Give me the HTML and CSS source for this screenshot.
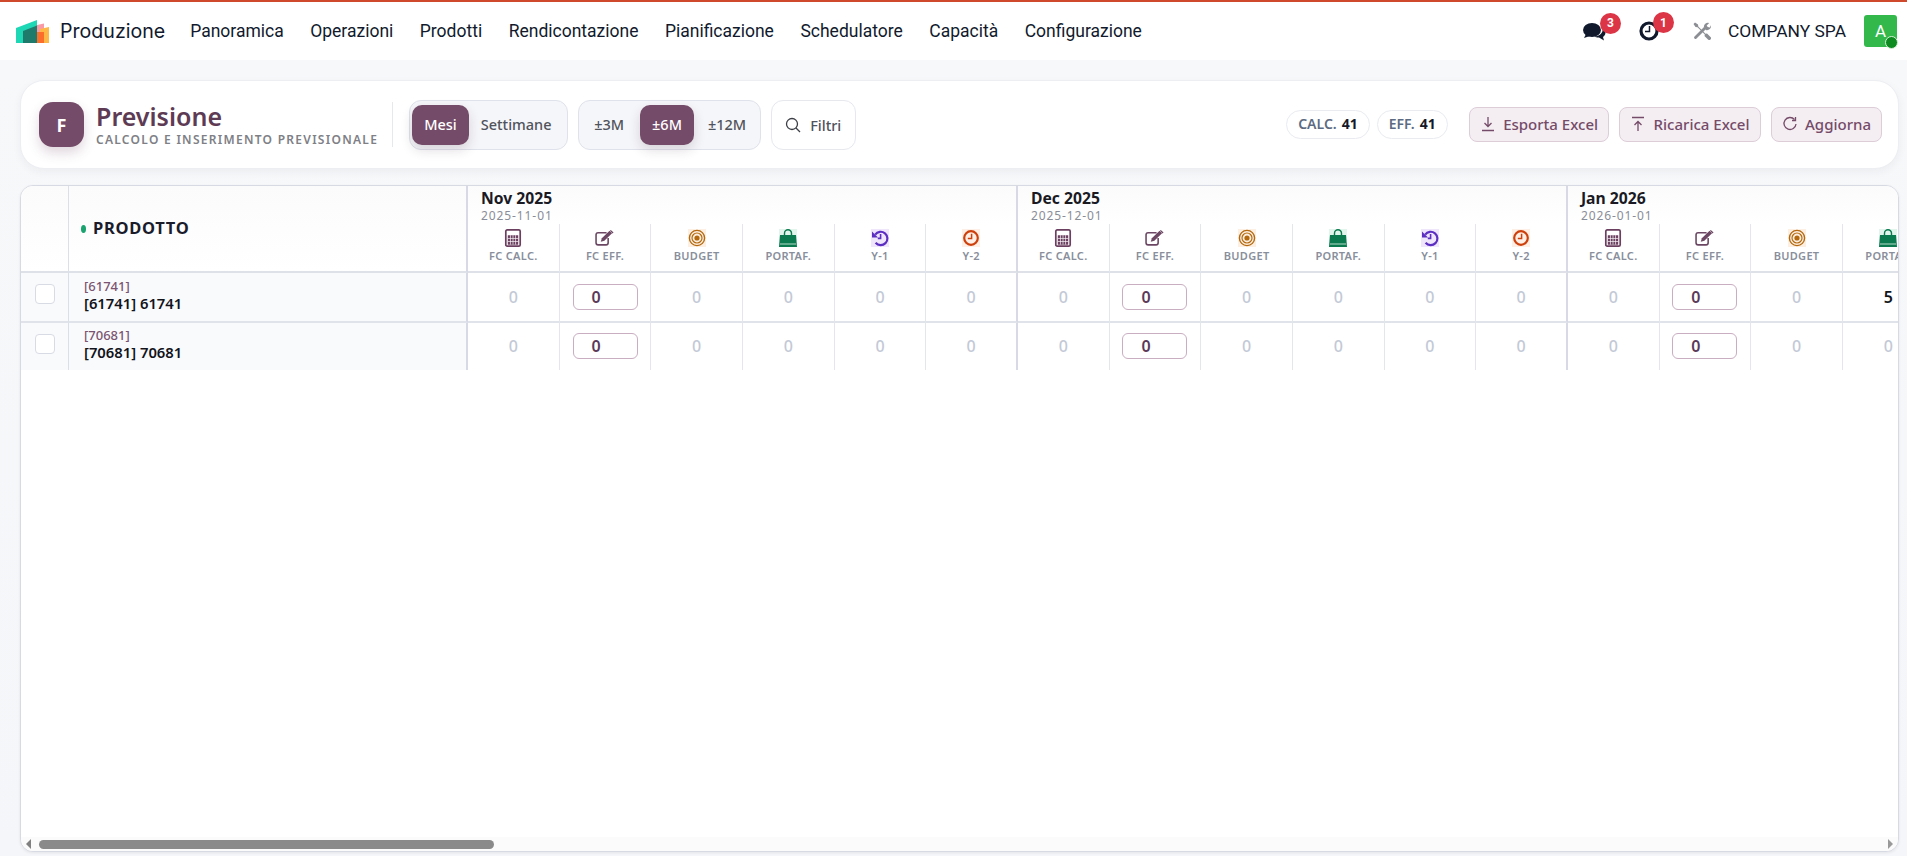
FILE: index.html
```html
<!DOCTYPE html>
<html lang="it">
<head>
<meta charset="utf-8">
<title>Previsione</title>
<link rel="stylesheet" href="styles.css">
</head>
<body>
<svg class="defs" width="0" height="0" aria-hidden="true">
  <symbol id="i-calc" viewBox="0 0 17 19"><rect x=".9" y=".9" width="15.200" height="17.200" rx="1.500" fill="none" stroke="currentColor" stroke-width="1.800"/><path d="M3 6.500h11V16.500H3z" fill="currentColor"/><path d="M5.800 6.500V16.500M8.500 6.500V16.500M11.200 6.500V16.500M3 10h11M3 13.200h11" stroke="#fff" stroke-width=".7"/></symbol>
  <symbol id="i-edit" viewBox="0 0 19 16"><path d="M12.500 8v4.500a2 2 0 0 1-2 2H3a2 2 0 0 1-2-2V5a2 2 0 0 1 2-2h8" fill="none" stroke="currentColor" stroke-width="1.500"/><path d="M5.500 11.500l1-3.200L13.800 1l2.400 2.400-7.300 7.200z" fill="currentColor"/><path d="M15 .3l2.600 2.500-.9.9-2.500-2.500z" fill="currentColor"/></symbol>
  <symbol id="i-target" viewBox="0 0 18 18"><rect width="18" height="18" fill="#fdf0e2"/><circle cx="9" cy="9" r="7.600" fill="none" stroke="currentColor" stroke-width="1.400"/><circle cx="9" cy="9" r="5" fill="none" stroke="currentColor" stroke-width="1.200"/><circle cx="9" cy="9" r="2.600" fill="currentColor"/></symbol>
  <symbol id="i-bag" viewBox="0 0 18 18"><rect width="18" height="18" fill="#e1f5ec"/><path d="M1 6h16l1 12H0z" fill="currentColor"/><path d="M5.500 8V4.200a3.500 3.500 0 0 1 7 0V8" fill="none" stroke="currentColor" stroke-width="1.400"/><path d="M1 15h16" stroke="#e1f5ec" stroke-width=".8"/></symbol>
  <symbol id="i-hist" viewBox="0 0 18 18"><rect width="18" height="18" fill="#efe6fb"/><path d="M4.200 5.600A6.700 6.700 0 1 1 4.600 13.800" fill="none" stroke="currentColor" stroke-width="2.200"/><path d="M1 2.500v6h6z" fill="currentColor"/><path d="M9.600 5v4.400H6.800" fill="none" stroke="currentColor" stroke-width="1.600"/></symbol>
  <symbol id="i-clock" viewBox="0 0 18 18"><rect width="18" height="18" fill="#fdeee6"/><circle cx="9" cy="9" r="6.800" fill="none" stroke="currentColor" stroke-width="2.200"/><path d="M9.600 4.800v4.800H5.800" fill="none" stroke="currentColor" stroke-width="1.500"/></symbol>
</svg>

<header class="topbar">
  <div class="brand">
    <svg class="logo" viewBox="0 0 33 23"><polygon points="21,5 28,3.500 28,23 21,23" fill="#fa9aa6"/><polygon points="24,9 33,7 33,23 24,23" fill="#fdb845"/><rect x="21" y="12" width="7" height="11" fill="#fb6e2b"/><polygon points="0,8 21,0 21,23 0,23" fill="#1ed7b5"/><polygon points="7,11 21,5.500 21,23 7,23" fill="#1f7a6c"/></svg>
    <span class="brand-name">Produzione</span>
  </div>
  <nav class="menu">
    <a>Panoramica</a><a>Operazioni</a><a>Prodotti</a><a>Rendicontazione</a><a>Pianificazione</a><a>Schedulatore</a><a>Capacità</a><a>Configurazione</a>
  </nav>
  <div class="systray">
    <span class="tray-item tray-chat">
      <svg class="tray-icon" viewBox="0 0 23 19"><ellipse cx="9" cy="8" rx="9" ry="7" fill="#111a2d"/><path d="M3 12l-2 4 6-2z" fill="#111a2d"/><path d="M19.500 6.500c2.500 1.300 3.500 3.500 2.800 5.500-.5 1.400-1.500 2.300-2.300 2.900l1 3.600-5-3c-1.800.1-3.400-.4-4.500-1.100 5-.2 9-3.600 8-7.900z" fill="#111a2d"/></svg>
      <span class="badge">3</span>
    </span>
    <span class="tray-item tray-clock">
      <svg class="tray-icon" viewBox="0 0 20 20"><circle cx="10" cy="10" r="8" fill="none" stroke="#111a2d" stroke-width="3.200"/><path d="M10.500 5v5.500H6" fill="none" stroke="#111a2d" stroke-width="1.500"/></svg>
      <span class="badge">1</span>
    </span>
    <span class="tray-item tray-tools">
      <svg class="tray-icon" viewBox="0 0 18 18"><path d="M1.500 14.500L11 5l2 2-9.500 9.500a1.400 1.400 0 0 1-2-2z" fill="#8b8e93"/><path d="M11 5.500a4 4 0 0 1 5.200-4.600L13.700 3.400l1 1.700 2.200.3 1-2.200a4 4 0 0 1-5 4.800z" fill="#8b8e93"/><path d="M2 .5l3 2 .3 2 7.200 7.300 1.500-.3 3.500 3.500a1.600 1.600 0 0 1-2.500 2.500l-3.500-3.500.3-1.500L4.500 5.300l-2-.3-2-3z" fill="#8b8e93"/></svg>
    </span>
    <span class="company">COMPANY SPA</span>
    <span class="avatar">A<span class="presence"></span></span>
  </div>
</header>

<main class="content">
  <section class="toolbar">
    <div class="title-block">
      <span class="title-icon">F</span>
      <div class="title-text">
        <h1>Previsione</h1>
        <p>CALCOLO E INSERIMENTO PREVISIONALE</p>
      </div>
    </div>
    <div class="seg seg-unit">
      <button class="seg-btn active">Mesi</button>
      <button class="seg-btn">Settimane</button>
    </div>
    <div class="seg seg-range">
      <button class="seg-btn">±3M</button>
      <button class="seg-btn active">±6M</button>
      <button class="seg-btn">±12M</button>
    </div>
    <button class="filter-btn">
      <svg class="btn-icon" viewBox="0 0 16 16"><circle cx="7" cy="7" r="5.500" fill="none" stroke="#3c3f46" stroke-width="1.300"/><path d="M11 11l4 4" stroke="#3c3f46" stroke-width="1.300"/></svg>
      Filtri
    </button>
    <div class="toolbar-right">
      <span class="pill pill-calc">CALC. <b>41</b></span>
      <span class="pill pill-eff">EFF. <b>41</b></span>
      <button class="act-btn btn-export">
        <svg class="btn-icon" viewBox="0 0 16 16"><path d="M8 1v9M4.500 7L8 10.500 11.500 7M2 14.500h12" fill="none" stroke="#744b68" stroke-width="1.300"/></svg>
        Esporta Excel
      </button>
      <button class="act-btn btn-reload">
        <svg class="btn-icon" viewBox="0 0 16 16"><path d="M8 15V5.500M4.500 9L8 5.500 11.500 9M2 1.500h12" fill="none" stroke="#744b68" stroke-width="1.300"/></svg>
        Ricarica Excel
      </button>
      <button class="act-btn btn-refresh">
        <svg class="btn-icon" viewBox="0 0 16 16"><path d="M12.500 3.500A6 6 0 1 0 14 8" fill="none" stroke="#744b68" stroke-width="1.300"/><path d="M10 4.500h3.500V1" fill="none" stroke="#744b68" stroke-width="1.300"/></svg>
        Aggiorna
      </button>
    </div>
  </section>

  <section class="grid-card">
    <div class="grid-scroll">
      <table class="grid">
        <colgroup>
          <col class="c-check"><col class="c-prod">
          <col class="c-val"><col class="c-val"><col class="c-val"><col class="c-val"><col class="c-val"><col class="c-val">
          <col class="c-val"><col class="c-val"><col class="c-val"><col class="c-val"><col class="c-val"><col class="c-val">
          <col class="c-val"><col class="c-val"><col class="c-val"><col class="c-val"><col class="c-val"><col class="c-val">
        </colgroup>
        <thead>
          <tr class="month-row">
            <th class="th-check" rowspan="2"></th>
            <th class="th-prod" rowspan="2"><span class="dot"></span>PRODOTTO</th>
            <th class="th-month" colspan="6"><strong>Nov 2025</strong><small>2025-11-01</small></th>
            <th class="th-month" colspan="6"><strong>Dec 2025</strong><small>2025-12-01</small></th>
            <th class="th-month" colspan="6"><strong>Jan 2026</strong><small>2026-01-01</small></th>
          </tr>
          <tr class="sub-row">
            <th><svg class="ci ci-calc"><use href="#i-calc"/></svg><span>FC CALC.</span></th>
            <th><svg class="ci ci-edit"><use href="#i-edit"/></svg><span>FC EFF.</span></th>
            <th><svg class="ci ci-target"><use href="#i-target"/></svg><span>BUDGET</span></th>
            <th><svg class="ci ci-bag"><use href="#i-bag"/></svg><span>PORTAF.</span></th>
            <th><svg class="ci ci-hist"><use href="#i-hist"/></svg><span>Y-1</span></th>
            <th class="m-last"><svg class="ci ci-clock"><use href="#i-clock"/></svg><span>Y-2</span></th>
            <th><svg class="ci ci-calc"><use href="#i-calc"/></svg><span>FC CALC.</span></th>
            <th><svg class="ci ci-edit"><use href="#i-edit"/></svg><span>FC EFF.</span></th>
            <th><svg class="ci ci-target"><use href="#i-target"/></svg><span>BUDGET</span></th>
            <th><svg class="ci ci-bag"><use href="#i-bag"/></svg><span>PORTAF.</span></th>
            <th><svg class="ci ci-hist"><use href="#i-hist"/></svg><span>Y-1</span></th>
            <th class="m-last"><svg class="ci ci-clock"><use href="#i-clock"/></svg><span>Y-2</span></th>
            <th><svg class="ci ci-calc"><use href="#i-calc"/></svg><span>FC CALC.</span></th>
            <th><svg class="ci ci-edit"><use href="#i-edit"/></svg><span>FC EFF.</span></th>
            <th><svg class="ci ci-target"><use href="#i-target"/></svg><span>BUDGET</span></th>
            <th><svg class="ci ci-bag"><use href="#i-bag"/></svg><span>PORTAF.</span></th>
            <th><svg class="ci ci-hist"><use href="#i-hist"/></svg><span>Y-1</span></th>
            <th class="m-last"><svg class="ci ci-clock"><use href="#i-clock"/></svg><span>Y-2</span></th>
          </tr>
        </thead>
        <tbody>
          <tr class="row-first">
            <td class="td-check"><span class="check"></span></td>
            <td class="td-prod"><span class="code">[61741]</span><span class="name">[61741] 61741</span></td>
            <td>0</td><td><span class="num-input">0</span></td><td>0</td><td>0</td><td>0</td><td class="m-last">0</td>
            <td>0</td><td><span class="num-input">0</span></td><td>0</td><td>0</td><td>0</td><td class="m-last">0</td>
            <td>0</td><td><span class="num-input">0</span></td><td>0</td><td class="nonzero">5</td><td>0</td><td class="m-last">0</td>
          </tr>
          <tr class="row-last">
            <td class="td-check"><span class="check"></span></td>
            <td class="td-prod"><span class="code">[70681]</span><span class="name">[70681] 70681</span></td>
            <td>0</td><td><span class="num-input">0</span></td><td>0</td><td>0</td><td>0</td><td class="m-last">0</td>
            <td>0</td><td><span class="num-input">0</span></td><td>0</td><td>0</td><td>0</td><td class="m-last">0</td>
            <td>0</td><td><span class="num-input">0</span></td><td>0</td><td>0</td><td>0</td><td class="m-last">0</td>
          </tr>
        </tbody>
      </table>
    </div>
    <div class="hbar">
      <span class="arrow arrow-left"></span>
      <span class="thumb"></span>
      <span class="arrow arrow-right"></span>
    </div>
  </section>
</main>
</body>
</html>
```
FILE: styles.css
```css
* { box-sizing: border-box; }
html, body { margin: 0; height: 856px; overflow: hidden; }
body {
  background: #f5f6f9;
  font-family: "Noto Sans", sans-serif;
  color: #1a1c28;
  display: flex;
  flex-direction: column;
}
.defs { position: absolute; }

/* top bar */
.topbar {
  height: 60px;
  flex: none;
  border-top: 2px solid #cf4a2d;
  background: #fff;
  display: flex;
  align-items: center;
  padding: 0 10px 0 16px;
  font-family: Roboto, sans-serif;
  color: #111a2d;
}
.brand { display: flex; align-items: center; gap: 11px; }
.logo { width: 33px; height: 23px; }
.brand-name { font-family: Inter, sans-serif; font-size: 19.600px; }
.menu { display: flex; gap: 26.500px; margin-left: 25px; font-size: 17.500px; }
.systray { margin-left: auto; display: flex; align-items: center; }
.tray-item { position: relative; display: flex; }
.tray-chat .tray-icon { width: 23px; height: 19px; }
.tray-clock { margin-left: 33px; }
.tray-clock .tray-icon { width: 20px; height: 20px; }
.tray-tools { margin-left: 34px; }
.tray-tools .tray-icon { width: 18px; height: 18px; }
.badge {
  position: absolute;
  top: -9px;
  left: 17px;
  width: 21px;
  height: 21px;
  border-radius: 50%;
  background: #dc3545;
  color: #fff;
  font-size: 12px;
  font-weight: 700;
  display: flex;
  align-items: center;
  justify-content: center;
}
.tray-clock .badge { left: 14px; }
.company { margin-left: 17px; font-size: 17.400px; }
.avatar {
  position: relative;
  margin-left: 18px;
  width: 33px;
  height: 32px;
  border-radius: 3px;
  background: #33b84b;
  color: #fff;
  font-size: 17px;
  display: flex;
  align-items: center;
  justify-content: center;
}
.presence {
  position: absolute;
  right: -1px;
  bottom: -2px;
  width: 13px;
  height: 13px;
  border-radius: 50%;
  background: #0d8a20;
  border: 1px solid #d8efd8;
}

/* content */
.content {
  flex: 1;
  min-height: 0;
  padding: 20px 8px 4px 20px;
  display: flex;
  flex-direction: column;
  gap: 16px;
  background: linear-gradient(#f7f8fa, #f5f6f9);
}
.toolbar {
  flex: none;
  height: 89px;
  background: #fff;
  border: 1px solid #eceef2;
  border-radius: 24px;
  box-shadow: 0 3px 8px rgba(30, 30, 50, .05);
  display: flex;
  align-items: center;
  padding: 0 16px 0 18px;
}
.title-block {
  display: flex;
  align-items: center;
  gap: 12px;
  height: 45px;
  padding-right: 14px;
  border-right: 1px solid #e6e8ee;
}
.title-icon {
  width: 45px;
  height: 45px;
  border-radius: 14px;
  background: #744b68;
  color: #fff;
  font-weight: 700;
  font-size: 18px;
  display: flex;
  align-items: center;
  justify-content: center;
  box-shadow: 0 6px 12px rgba(116, 75, 104, .22);
}
.title-text h1 {
  margin: 0 0 4px;
  font-size: 25px;
  line-height: 26px;
  font-weight: 600;
  color: #5e3b54;
}
.title-text p {
  margin: 0;
  font-size: 12px;
  line-height: 14px;
  font-weight: 600;
  letter-spacing: 1.280px;
  color: #7e8086;
}
.seg {
  height: 50px;
  margin-left: 10px;
  padding: 4px 2px;
  background: #f5f6f9;
  border: 1px solid #dfe2ea;
  border-radius: 12px;
  display: flex;
}
.seg-unit { margin-left: 16px; width: 159px; }
.seg-range { width: 183px; padding-left: 3px; }
.seg-btn {
  border: 0;
  background: none;
  padding: 0 12px 2px;
  border-radius: 10px;
  font: 500 14.500px "Noto Sans", sans-serif;
  color: #50535c;
}
.seg-btn.active {
  background: #744b68;
  color: #fff;
  box-shadow: 0 5px 12px rgba(60, 40, 60, .16);
}
.seg-range .seg-btn.active { margin: 0 2px 0 4px; }
.filter-btn {
  height: 50px;
  width: 85px;
  margin-left: 10px;
  padding: 0 0 0 13px;
  border: 1px solid #e6e8ee;
  border-radius: 12px;
  background: #fff;
  font: 500 14.500px "Noto Sans", sans-serif;
  color: #50535c;
  display: flex;
  align-items: center;
  gap: 9px;
}
.btn-icon { width: 16px; height: 16px; flex: none; }
.toolbar-right { margin-left: auto; display: flex; align-items: center; }
.pill {
  height: 29px;
  padding: 0 11px 2px;
  border: 1px solid #e9ebf0;
  border-radius: 15px;
  background: #fff;
  font-size: 14px;
  font-weight: 600;
  color: #5d6b82;
  display: flex;
  align-items: center;
  gap: 5px;
}
.pill b { color: #151925; font-weight: 700; }
.pill-eff { margin-left: 7px; margin-right: 21px; }
.act-btn {
  height: 35px;
  margin-left: 10px;
  padding: 0 10px 2px;
  border: 1px solid #dccdd7;
  border-radius: 8px;
  background: #f4eef3;
  color: #744b68;
  font: 500 15px "Noto Sans", sans-serif;
  display: flex;
  align-items: center;
  gap: 7.500px;
}
.btn-export { margin-left: 0; }

/* grid */
.grid-card {
  position: relative;
  flex: 1;
  min-height: 0;
  background: #fff;
  border: 1px solid #d8dae3;
  border-radius: 13px;
  overflow: hidden;
  box-shadow: 0 1px 3px rgba(30, 30, 50, .08);
}
.grid-scroll { height: 100%; overflow: hidden; }
.grid { border-collapse: separate; border-spacing: 0; table-layout: fixed; width: 2097px; }
.c-check { width: 48px; }
.c-prod { width: 399px; }
.c-val { width: 91.670px; }
th { padding: 0; font-weight: 600; background: #fff; }
.month-row th { height: 38px; background: linear-gradient(#fbfbfc, #fff); }
.th-check, .th-prod {
  border-right: 1px solid #dcdfe7;
  border-bottom: 2px solid #dfe1e8;
}
.th-prod {
  border-right-width: 2px;
  border-right-color: #d7dae4;
  text-align: left;
  padding: 0 0 2px 12px;
  font-size: 16.500px;
  font-weight: 700;
  letter-spacing: .7px;
  color: #1a1c2b;
}
.dot {
  display: inline-block;
  width: 5px;
  height: 8px;
  margin-right: 7px;
  border-radius: 50%;
  background: #1aa36f;
  vertical-align: 1px;
}
.th-month {
  text-align: left;
  vertical-align: top;
  padding: 3px 0 0 13px;
  border-right: 2px solid #d7dae4;
}
.th-month strong { display: block; font-size: 15.700px; line-height: 19px; font-weight: 700; color: #1a1a24; }
.th-month small { display: block; margin-top: 1px; font-size: 12px; line-height: 14px; font-weight: 400; letter-spacing: .9px; color: #8a8d97; }
.sub-row th {
  height: 49px;
  text-align: center;
  vertical-align: top;
  padding-top: 5px;
  border-right: 1px solid #e4e6ec;
  border-bottom: 2px solid #dfe1e8;
  font-size: 11px;
  letter-spacing: .3px;
  color: #888e9b;
}
.sub-row th.m-last { border-right: 2px solid #d7dae4; }
.sub-row th span { display: block; line-height: 13px; margin-top: 2px; }
.ci { display: block; margin: 0 auto; width: 18px; height: 18px; }
.ci-calc { color: #6b3f5f; }
.ci-edit { width: 20px; color: #6b4763; }
.ci-target { color: #b5690f; }
.ci-bag { color: #0c7a4f; }
.ci-hist { color: #5c2fc2; }
.ci-clock { color: #cd400c; }

td {
  padding: 0;
  height: 50px;
  text-align: center;
  font-size: 16px;
  font-weight: 500;
  color: #c3c9d6;
  border-right: 1px solid #e4e6ec;
  border-bottom: 2px solid #e0e3ea;
  background: #fff;
}
.row-last td { border-bottom: 0; height: 47px; padding-bottom: 2px; }
td.m-last { border-right: 2px solid #d7dae4; }
td.nonzero { color: #14151c; font-weight: 600; }
.td-check, .td-prod { background: #f9fafc; }
.td-check { border-right-color: #dcdfe7; vertical-align: top; padding-top: 11px; }
.row-last .td-check { padding-bottom: 0; }
.check {
  display: block;
  width: 20px;
  height: 20px;
  margin: 0 auto;
  border: 1px solid #d8dbe3;
  border-radius: 4px;
  background: #fff;
}
.td-prod {
  text-align: left;
  padding: 6px 0 0 15px;
  vertical-align: top;
  border-right: 2px solid #d7dae4;
}
.row-last .td-prod { padding: 5px 0 0 15px; }
.code { display: block; font-size: 13px; line-height: 15px; font-weight: 500; color: #7a5470; }
.name { display: block; font-size: 14.800px; line-height: 19px; font-weight: 600; color: #12131b; }
.num-input {
  display: block;
  width: 65px;
  height: 26px;
  margin: 0 auto;
  padding-right: 18px;
  border: 1px solid #c9adc0;
  border-radius: 6px;
  background: #fff;
  line-height: 24px;
  color: #5a3a58;
  font-weight: 600;
}

/* horizontal scrollbar of the grid */
.hbar {
  position: absolute;
  left: 0;
  right: 0;
  bottom: 0;
  height: 14px;
  padding: 0 5px;
  background: #fbfbfb;
  display: flex;
  align-items: center;
}
.thumb {
  width: 455px;
  height: 9px;
  margin-left: 8px;
  border-radius: 5px;
  background: #8a8a8a;
}
.arrow {
  width: 0;
  height: 0;
  border-top: 5px solid transparent;
  border-bottom: 5px solid transparent;
}
.arrow-left { border-right: 5px solid #808080; }
.arrow-right { margin-left: auto; border-left: 5px solid #999; }
```
